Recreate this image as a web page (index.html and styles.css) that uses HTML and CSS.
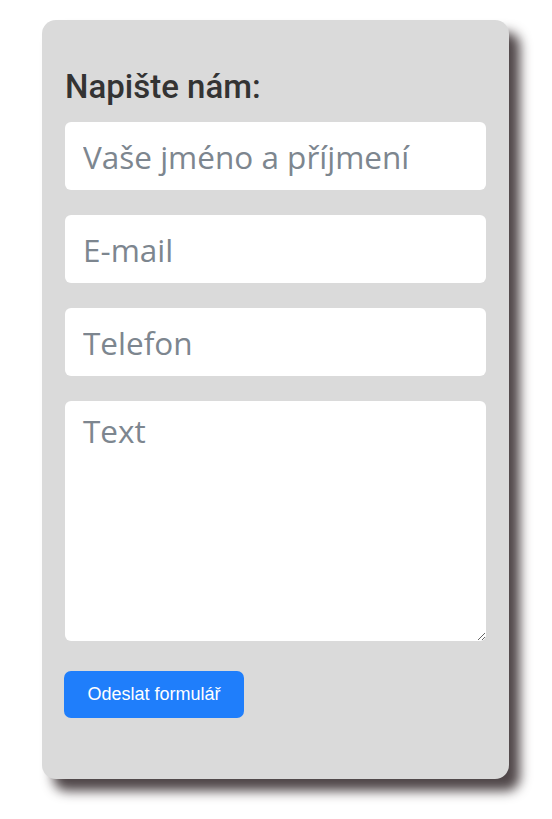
FILE: index.html
```html
<!DOCTYPE html>
<html lang="cs">
<head>
<meta charset="utf-8">
<title>Kontakt</title>
<link rel="stylesheet" href="styles.css">
</head>
<body>
<form class="card">
  <h2 class="title">Napište nám:</h2>
  <input class="field" type="text" placeholder="Vaše jméno a příjmení">
  <input class="field" type="email" placeholder="E-mail">
  <input class="field" type="tel" placeholder="Telefon">
  <textarea class="field area" placeholder="Text"></textarea>
  <button class="btn" type="button">Odeslat formulář</button>
</form>
</body>
</html>
```
FILE: styles.css
```css
html, body {
  margin: 0;
  background: #ffffff;
}
body {
  padding: 20px 0 40px 42px;
}
.card {
  box-sizing: border-box;
  width: 467px;
  height: 759px;
  background: #dadada;
  border-radius: 14px;
  box-shadow: 11px 12px 12px rgba(70, 60, 62, 0.95);
  padding: 48px 23px 0 23px;
  display: flex;
  flex-direction: column;
  align-items: flex-start;
}
.title {
  margin: 0 0 16px 0;
  font-family: Roboto, sans-serif;
  font-weight: 500;
  font-size: 33px;
  line-height: 38px;
  color: #333333;
}
.field {
  box-sizing: border-box;
  width: 421px;
  height: 68px;
  margin: 0 0 25px 0;
  border: none;
  border-radius: 6px;
  background: #ffffff;
  padding: 0 18px;
  font-family: "Open Sans", sans-serif;
  font-size: 31.5px;
  color: #495057;
  outline: none;
}
.field::placeholder {
  color: #7d868f;
  opacity: 1;
}
.area {
  height: 240px;
  padding-top: 8px;
  resize: vertical;
  margin-bottom: 30px;
}
.btn {
  width: 180px;
  height: 47px;
  border: none;
  border-radius: 7px;
  background: #1f7efb;
  color: #ffffff;
  font-family: "Liberation Sans", Arial, sans-serif;
  font-size: 18px;
  padding: 0;
  margin-left: -1px;
}
```
